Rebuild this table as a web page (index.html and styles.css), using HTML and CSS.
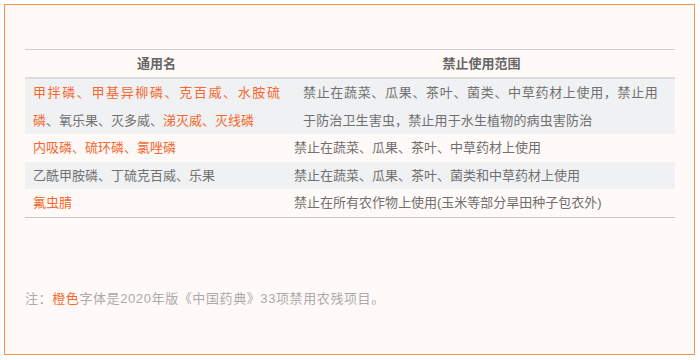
FILE: index.html
```html
<!DOCTYPE html>
<html lang="zh-CN">
<head>
<meta charset="UTF-8">
<meta name="viewport" content="width=device-width, initial-scale=1.0">
<title>禁用农药</title>
<link rel="stylesheet" href="styles.css">
</head>
<body>

<div class="card">
  <table class="ban-table">
    <thead>
      <tr>
        <th class="col-name">通用名</th>
        <th class="col-scope">禁止使用范围</th>
      </tr>
    </thead>
    <tbody>
      <tr class="shade">
        <td class="name justify"><span class="hl">甲拌磷、甲基异柳磷、克百威、水胺硫磷</span>、氧乐果、灭多威、<span class="hl">涕灭威、灭线磷</span></td>
        <td class="scope justify wide">禁止在蔬菜、瓜果、茶叶、菌类、中草药材上使用，禁止用于防治卫生害虫，禁止用于水生植物的病虫害防治</td>
      </tr>
      <tr>
        <td class="name"><span class="hl">内吸磷、硫环磷、氯唑磷</span></td>
        <td class="scope">禁止在蔬菜、瓜果、茶叶、中草药材上使用</td>
      </tr>
      <tr class="shade">
        <td class="name">乙酰甲胺磷、丁硫克百威、乐果</td>
        <td class="scope">禁止在蔬菜、瓜果、茶叶、菌类和中草药材上使用</td>
      </tr>
      <tr>
        <td class="name"><span class="hl">氟虫腈</span></td>
        <td class="scope">禁止在所有农作物上使用(玉米等部分旱田种子包衣外)</td>
      </tr>
    </tbody>
  </table>

  <p class="note">注：<span class="hl">橙色</span>字体是2020年版《中国药典》33项禁用农残项目。</p>
</div>

</body>
</html>
```

FILE: styles.css
```css
html, body {
  margin: 0;
  padding: 0;
  background: #fff;
}
body {
  padding: 4px;
  font-family: "Liberation Sans", "Noto Sans CJK SC", sans-serif;
  font-size: 13px;
  color: #666;
}
.card {
  box-sizing: border-box;
  width: 691px;
  height: 351px;
  border: 1px solid #f7954f;
  background: #fffaf7;
  padding: 44px 19px 0 20px;
}
.ban-table {
  width: 100%;
  border-collapse: collapse;
  border-top: 1px solid #cfcfcf;
  border-bottom: 1px solid #c8c8c8;
}
.ban-table th {
  font-weight: bold;
  color: #666;
  height: 27px;
  line-height: 27px;
  padding: 0;
  text-align: center;
  border-bottom: 2px solid #dcdcdc;
}
.col-name { width: 263px; }
.ban-table td {
  line-height: 27.5px;
  padding: 0;
  vertical-align: middle;
}
.name {
  padding: 0 8px !important;
  color: #707070;
}
.scope {
  padding: 0 6px !important;
  color: #707070;
}
/* 两行的说明，右侧留白多一些 */
.scope.wide {
  padding: 0 17px 0 15px !important;
  letter-spacing: 0.15px;
}
.justify {
  text-align: justify;
}
.shade td {
  background: #f0f1f2;
}
.hl {
  color: #f5672f;
}
.note {
  margin: 74px 0 0;
  color: #aaa;
  letter-spacing: 0.6px;
  line-height: 14px;
}
```
